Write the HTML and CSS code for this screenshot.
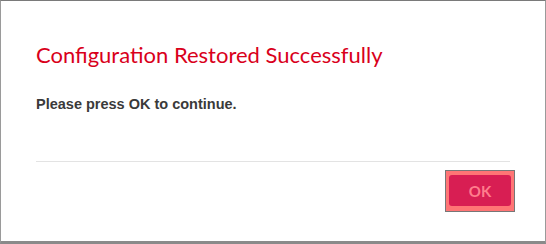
FILE: index.html
```html
<!DOCTYPE html>
<html lang="en">
<head>
    <meta charset="UTF-8">
    <title>Configuration Restored</title>
    <link rel="stylesheet" href="styles.css">
</head>
<body>
    <div class="modal">
        <div class="modal-header">
            <h2 class="modal-title">Configuration Restored Successfully</h2>
        </div>
        <div class="modal-body">
            <p>Please press OK to continue.</p>
        </div>
        <div class="modal-footer">
            <div class="btn-focus">
                <button class="ok-btn">OK</button>
            </div>
        </div>
    </div>
</body>
</html>
```

FILE: styles.css
```css
html, body {
    margin: 0;
    padding: 0;
    background: #fff;
}

.modal {
    box-sizing: border-box;
    width: 546px;
    height: 244px;
    border-top: 1px solid #7a7a7a;
    border-left: 1px solid #9a9a9a;
    border-right: 1px solid #9a9a9a;
    border-bottom: 3px solid #8a8a8a;
    background: #fff;
    padding: 0 35px 0 35px;
}

.modal-header {
    padding-top: 40px;
}

.modal-title {
    margin: 0;
    font-family: "Lato", sans-serif;
    font-weight: normal;
    font-size: 22px;
    line-height: 28px;
    color: #d9001b;
}

.modal-body {
    padding-top: 27px;
    padding-bottom: 49px;
    border-bottom: 1px solid #e3e3e3;
}

.modal-body p {
    margin: 0;
    font-family: "Liberation Sans", Arial, sans-serif;
    font-weight: bold;
    font-size: 14.5px;
    line-height: 16px;
    color: #3a3a3a;
}

.modal-footer {
    display: flex;
    justify-content: flex-end;
    padding-top: 8px;
    margin-right: -5px;
}

.btn-focus {
    border: 1px solid #777;
    background: #ff7575;
    padding: 4px 3px 5px 3px;
}

.ok-btn {
    display: block;
    width: 62px;
    height: 31px;
    border: none;
    border-radius: 3px;
    background: #d81e53;
    color: #ff7d8c;
    font-family: "Lato", sans-serif;
    font-weight: bold;
    font-size: 15px;
    padding: 0;
}
```
